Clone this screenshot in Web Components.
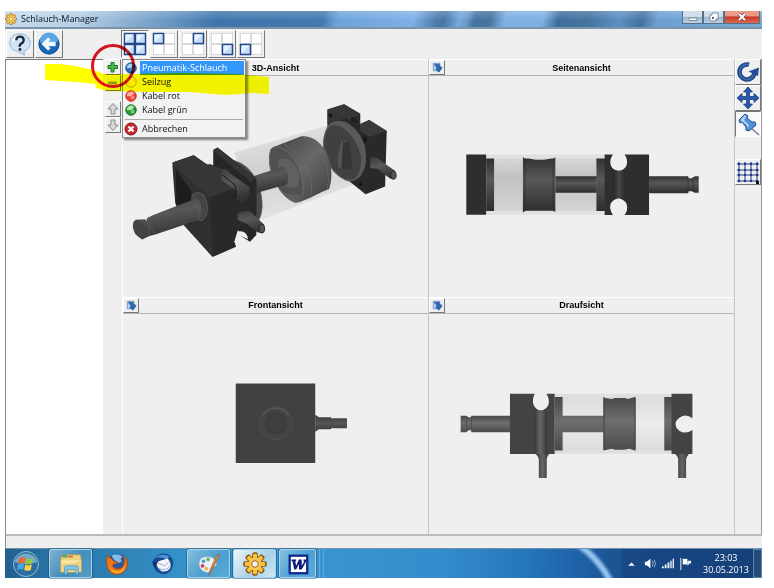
<!DOCTYPE html>
<html lang="de">
<head>
<meta charset="utf-8">
<meta name="viewport" content="width=device-width, initial-scale=1">
<title>Schlauch-Manager</title>
<style>
html,body{margin:0;height:100%;background:#fff}
body{box-sizing:border-box;min-height:100vh;padding:11px 12px 10px 5px;display:flex;font:9px/14px "Open Sans","Noto Sans",sans-serif;color:#111}
</style>
</head>
<body>
<sm-desktop></sm-desktop>
<script>
const svg=(vb,body)=>`<svg viewBox="${vb}" aria-hidden="true">${body}</svg>`;
const paneBox=(x,y,on)=>`<rect x="${x}" y="${y}" width="10" height="10" fill="${on?'#c4dcf6':'#fff'}" stroke="${on?'#24478c':'#d0d3d8'}" stroke-width="${on?1.5:.8}"/>${on?`<path d="M${x+1} ${y+9}V${y+1}H${x+9}Z" fill="#e6f2ff"/>`:''}`;
const panes=(...on)=>svg('0 0 24 24',[[1.5,1.5],[12.5,1.5],[1.5,12.5],[12.5,12.5]].map(([x,y],i)=>({i,s:paneBox(x,y,on.includes(i))})).sort((a,b)=>on.includes(a.i)-on.includes(b.i)).map(o=>o.s).join(''));
const ball=(a,b,c)=>svg('0 0 14 14',`<circle cx="7" cy="7" r="5.3" fill="${a}" stroke="${c}" stroke-width=".8"/><path d="M3 7A4 4 0 0 1 10 4Q8 8 3 7Z" fill="${b}"/><circle cx="8.500" cy="8.500" r="2" fill="${b}" opacity=".6"/>`);
const gearTeeth=Array.from({length:8},(_,i)=>`<rect x="10" y="1" width="4" height="6" rx="1" transform="rotate(${i*45} 12 12)"/>`).join('');
const gear=svg('0 0 24 24',`<g stroke="#8f5a0c" stroke-width="1.600" fill="#f5b32e">${gearTeeth}<circle cx="12" cy="12" r="7"/></g><g fill="#f9bf3e">${gearTeeth.replaceAll('y="1"','y="2"')}</g><circle cx="12" cy="12" r="6.500" fill="#fbc64c"/><circle cx="12" cy="12" r="3.300" fill="#eef4f8" stroke="#9c661a"/>`);
const arrowUp=`<path d="M7 1.500L12 7H9v5H5V7H2Z" fill="#d7d7d7" stroke="#8a8a8a"/>`;
const ICONS={
 gear,
 help:svg('0 0 26 26',`<path d="M13 2C6 2 2 6 2 11.500S5 20 10 21L18 25L17 21C21 20 24 16 24 11.500S20 2 13 2Z" fill="#cfe4f6" stroke="#8fb0ce"/><path d="M5 9Q8 3 14 4Q8 6 6 12Z" fill="#fff"/><path d="M9 9Q9 5 13 5T17 9Q17 11 14.500 12.500T13 16" fill="none" stroke="#222c38" stroke-width="2.600"/><circle cx="13" cy="19" r="1.600" fill="#222c38"/>`),
 back:svg('0 0 26 26',`<circle cx="13" cy="13" r="11" fill="#1763b4" stroke="#0f4788"/><path d="M3 11A10 10 0 0 1 23 10Q13 14 3 11Z" fill="#5da6e4"/><path d="M5 13L12 6L14.500 8.500L12.500 10.800H20V15.200H12.500L14.500 17.500L12 20Z" fill="#f2f9ff" stroke="#d0e5f7" stroke-width=".5"/>`),
 p0:panes(0,1,2,3),p1:panes(0),p2:panes(1),p3:panes(3),p4:panes(2),
 plus:svg('0 0 14 14',`<path d="M5 2.500h3v3h3.500v3H8V12H5V8.500H2v-3h3Z" fill="#47b947" stroke="#16771d"/>`),
 minus:svg('0 0 14 14',`<path d="M2.500 6h8v2h-8Z" fill="#aaa" stroke="#777" stroke-width=".6"/>`),
 up:svg('0 0 14 14',arrowUp), down:svg('0 0 14 14',`<g transform="rotate(180 7 7)">${arrowUp}</g>`),
 expand:svg('0 0 14 14',`<path d="M2.500 2.500h7v8h-7Z" fill="#bcd4f0" stroke="#5584c0" stroke-width=".8"/><path d="M3.500 3.500h5.500v3l2-.500l1 1.500L8.500 12L5 9l1.500-1.500Z" fill="#2e69b5" stroke="#194686" stroke-width=".5"/>`),
 blue:ball('#236cc0','#a3d4fa','#154786'),yellow:ball('#f4e39a','#fff7cf','#b39e59'),red:ball('#e54336','#ffb1a4','#c52b25'),green:ball('#23952f','#b5efac','#16701e'),
 cancel:svg('0 0 14 14',`<circle cx="7" cy="7" r="6" fill="#c6272d" stroke="#85151c"/><path d="M4.500 4.500l5 5m0-5l-5 5" stroke="#fff" stroke-width="2.200"/>`),
 rotate:svg('0 0 24 24',`<path d="M13 4.700A7.500 7.500 0 1 0 18.500 12" fill="none" stroke="#1c3f83" stroke-width="4.500"/><path d="M13 4.700A7.500 7.500 0 1 0 18.500 12" fill="none" stroke="#3968af" stroke-width="2"/><path d="M12.500 11.500L23 7.500L22 16Z" fill="#244b93"/>`),
 move:svg('0 0 24 24',`<path d="M12 1l4.500 5H13.500v4.500H18V7.500L23 12l-5 4.500V13.500H13.500V18H16.500L12 23L7.500 18H10.500V13.500H6V16.500L1 12L6 7.500V10.500H10.500V6H7.500Z" fill="#285ba7" stroke="#163b7e" stroke-width=".8"/>`),
 pin:svg('0 0 24 24',`<path d="M14 15L23 23" stroke="#758394" stroke-width="1.500"/><path d="M3 8L9 2L12 4L11 6L16 10L19 10L20 13L13 19L10 18L10 15L6 10L4 11Z" fill="#5590d8" stroke="#234f92"/><path d="M5 7L9 3L10 5L8 8L13 13L12 16Q10 11 5 9Z" fill="#b0d3f6"/>`),
 grid:svg('0 0 24 24',`<path d="M3 2v20M9 2v20M15 2v20M21 2v20M1 4h22M1 10h22M1 15h22M1 21h22" stroke="#1e3985" fill="none"/><g fill="#1e3985">${[3,9,15,21].map(x=>[4,10,15,21].map(y=>`<circle cx="${x}" cy="${y}" r="1.200"/>`).join('')).join('')}</g><path d="M20 21h3v3h-3Z" fill="#111"/>`),
 start:svg('0 0 28 28',`<circle cx="14" cy="14" r="12.500" fill="#2c6d9e" stroke="#8cbcd9"/><path d="M2.500 12A12 12 0 0 1 25.500 12Q14 16 2.500 12Z" fill="#8fbdd5" opacity=".75"/><path d="M7 8.500Q10 6.500 13.300 8L12.300 13.300Q9 12 6 13.700Z" fill="#ed6534"/><path d="M14.300 8.300Q17.500 10 21 8.200L20 13.500Q17 15.200 13.400 13.500Z" fill="#93c83e"/><path d="M5.800 14.700Q9 13 12 14.500L11 19.800Q8 18.200 5 20Z" fill="#45a9e8"/><path d="M13.200 14.600Q16.500 16.200 19.800 14.600L18.800 20Q15.500 21.500 12.200 20Z" fill="#fbd342"/>`),
 folder:svg('0 0 26 26',`<path d="M2 5h6l1-2h14l1 3v16H2Z" fill="#ecd27d" stroke="#b79b48"/><path d="M4 3h5v3H4Z" fill="#66a45b"/><path d="M10 4h5v2h-5Z" fill="#cf6b46"/><path d="M2 9h22v12H2Z" fill="#f8e6a4"/><path d="M2 12Q14 14 24 9v12H2Z" fill="#edd383"/><path d="M6 24v-7Q6 15 8 15h11q2 0 2 2v7h-3v-5H9v5Z" fill="#83c8ec" stroke="#468fb8" stroke-width=".7"/>`),
 firefox:svg('0 0 26 26',`<circle cx="13" cy="12" r="10.500" fill="#2858a5"/><path d="M7 4Q14 0 20 6Q17 5 17 8Q20 10 15 12Q10 10 7 4Z" fill="#83bde5"/><path d="M3 3Q0 11 3 18Q7 26 15 24Q24 22 24.500 12Q24 7 20 4Q22 10 20 14Q18 19 12 18Q7 16 9 13Q12 14 14 11Q9 11 8 8Q5 7 3 3Z" fill="#e87819" stroke="#a53c12" stroke-width=".8"/><path d="M3 10Q5 21 14 21Q20 20 22 14Q21 23 13 23Q5 22 3 10Z" fill="#f5ba31"/>`),
 mail:svg('0 0 26 26',`<path d="M3 8Q9 0 17 2Q24 5 24 13Q23 22 15 24Q5 24 3 16Q0 11 3 8Z" fill="#174a90"/><path d="M4 7Q12 0 20 5L17 8Q10 4 4 7Z" fill="#4b96d7"/><path d="M8 10L18 7Q22 11 21 17Q18 22 12 21Q7 18 6 13Z" fill="#f2f4f8"/><path d="M7 12L15 15L20 10M9 18Q16 21 20 16" fill="none" stroke="#92a9c5"/><path d="M2 10Q5 12 9 9Q4 14 5 18Q2 15 2 10Z" fill="#102e67"/>`),
 paint:svg('0 0 26 26',`<path d="M2 13Q2 5 11 5Q19 5 21 11Q22 16 17 16Q14 17 15 20Q13 24 7 21Q2 18 2 13Z" fill="#e7f1fa" stroke="#87aac9"/><circle cx="7" cy="10" r="2" fill="#4c9ed8"/><circle cx="12" cy="8" r="2" fill="#60b75a"/><circle cx="6" cy="15" r="2" fill="#d33f4d"/><circle cx="10" cy="18" r="2" fill="#ecb33e"/><path d="M23 2Q25 3 22 8L15 22L13 25L14 20L20 6Z" fill="#d88537" stroke="#975c34" stroke-width=".7"/>`),
 word:svg('0 0 26 26',`<rect x="4" y="4" width="19" height="19" fill="#fff" stroke="#13298a" stroke-width="2.500"/><path d="M6 8h5v2H10l1 5 3-7h3l0 7 3-5h-1V8h4l-6 11h-3v-6l-3 6H9L7 10H6Z" fill="#0c1d75"/>`),
 trayup:svg('0 0 12 12','<path d="M3 8L6 5L9 8Z" fill="#fff"/>'),
 sound:svg('0 0 14 14','<path d="M2 5h2l4-3v10L4 9H2Z" fill="#fff"/><path d="M10 4q2 3 0 6M12 3q3 4 0 8" fill="none" stroke="#bed7ee" stroke-width=".8"/>'),
 signal:svg('0 0 14 14','<path d="M1 10h2v2H1ZM4 8h2v4H4ZM7 6h2v6H7ZM10 4h1.500v8H10ZM12.500 2H14v10H12.500Z" fill="#e8f1f8"/>'),
 flag:svg('0 0 14 14','<path d="M2 1v13" stroke="#fff"/><path d="M4 2h5v6H4Z" fill="#fff"/><path d="M9 4h4v3h-2l-1 2H9Z" fill="#e8f1f8"/>')
};
class SmElement extends HTMLElement{
 connectedCallback(){ if(!this.shadowRoot){this.attachShadow({mode:'open'});this.shadowRoot.innerHTML=this.render();} }
 get label(){return this.getAttribute('label')||'';}
}
const def=(name,render)=>customElements.define(name,class extends SmElement{render(){return render(this)}});

def('sm-icon',e=>`<style>:host{display:block;flex:none;width:var(--icon,14px);height:var(--icon,14px)}svg{display:block;width:100%;height:100%}</style>${ICONS[e.getAttribute('name')]}`);

def('sm-tool',e=>`<style>:host{display:block;flex:none}
button{box-sizing:border-box;display:grid;place-items:center;width:var(--w,28px);height:var(--h,28px);padding:0;background:#efefef;border:1px solid;border-color:#fff #777 #777 #fff}
:host([pressed]) button{background:#f9f9f9;border-color:#777 #fff #fff #777}</style>
<button type="button" aria-label="${e.label}"><sm-icon name="${e.getAttribute('icon')}"></sm-icon></button>`);

def('sm-titlebar',()=>`<style>
:host{display:flex;height:16px;align-items:stretch;border-bottom:2px solid #7d93a8;color:#0c1520;
background:linear-gradient(#fff3,#fff0 60%),linear-gradient(105deg,#c5dbec 0,#b6d0e6 10%,#8fb2d2 16%,#6896c4 22%,#3f75ac 28%,#4378b0 42%,#6ea3d8 44%,#7db0e6 54%,#4d7cab 57%,#4676a8 58%,#74a8dc 60%,#6a9bcd 61%,#45729f 62%,#45729f 64%,#7db0e3 66%,#7db0e3 71%,#3f6d9d 73%,#45749f 77%,#5b8fc4 81%,#44729f 84%,#6ca0d2 86%,#7aa9d4 100%)}
sm-icon{--icon:12px;align-self:center;margin:0 4px 0 0}
h1{margin:0;font:inherit;line-height:16px;flex:1;min-width:0}
.win{display:flex;height:13px}
button{display:grid;place-items:center;width:21px;padding:0;border:1px solid #56708a;border-top:0;background:linear-gradient(#d3e0ec 45%,#9db7cf 50%,#bdd1e4)}
button.close{width:36px;background:linear-gradient(#eb9a87 40%,#c83725 50%,#dd6b50);margin-right:2px}
svg{width:12px;height:10px}</style>
<sm-icon name="gear"></sm-icon><h1>Schlauch-Manager</h1>
<div class="win"><button type="button" aria-label="Minimieren">${svg('0 0 12 10','<path d="M2 6h8v2.500H2Z" fill="#fff" stroke="#53687d" stroke-width=".7"/>')}</button>
<button type="button" aria-label="Wiederherstellen">${svg('0 0 12 10','<path d="M4 1h6v6H8v2H2V3h2Z" fill="#fff" stroke="#53687d" stroke-width=".7"/><path d="M4 5h2v2H4Z" fill="#53687d"/>')}</button>
<button type="button" class="close" aria-label="Schließen">${svg('0 0 12 10','<path d="M3 2l6 6m0-6l-6 6" stroke="#6e3b3b" stroke-width="3.200"/><path d="M3 2l6 6m0-6l-6 6" stroke="#fff" stroke-width="2"/>')}</button></div>`);

def('sm-toolbar',()=>`<style>:host{display:flex;align-items:center;gap:1px;height:30px;padding-left:1px;background:#efefef}
sm-tool{--icon:24px}.gap{width:56px}</style>
<sm-tool icon="help" label="Hilfe"></sm-tool><sm-tool icon="back" label="Zurück"></sm-tool><span class="gap"></span>
<sm-tool pressed icon="p0" label="Vier Ansichten"></sm-tool><sm-tool icon="p1" label="3D-Ansicht"></sm-tool><sm-tool icon="p2" label="Seitenansicht"></sm-tool><sm-tool icon="p3" label="Draufsicht"></sm-tool><sm-tool icon="p4" label="Frontansicht"></sm-tool>`);

def('sm-item',e=>`<style>:host{display:block}
button{display:flex;align-items:center;gap:2px;width:100%;height:14px;padding:0;border:0;background:none;font:inherit;color:#111;text-align:left}
span{flex:1;padding-left:2px;line-height:14px}
:host([selected]) span{background:#3296fa;color:#fff}</style>
<button type="button" role="menuitem"><sm-icon name="${e.getAttribute('icon')}"></sm-icon><span><slot></slot></span></button>`);

def('sm-menu',()=>`<style>:host{display:block;box-sizing:border-box;width:124px;padding:1px;background:#f2f2f2;border:1px solid #8d8d8d;box-shadow:2px 2px 2px #0007}
hr{border:0;border-top:1px solid #aaa;margin:2px 1px}</style>
<div role="menu"><sm-item selected icon="blue">Pneumatik-Schlauch</sm-item><sm-item icon="yellow">Seilzug</sm-item><sm-item icon="red">Kabel rot</sm-item><sm-item icon="green">Kabel grün</sm-item><hr><sm-item icon="cancel">Abbrechen</sm-item></div>`);

def('sm-side',()=>`<style>:host{position:relative;display:flex;flex-direction:column;--w:16px;--h:16px;--icon:14px}
.sp{height:10px}sm-menu{position:absolute;left:100%;top:0;z-index:2}</style>
<sm-tool icon="plus" label="Hinzufügen"></sm-tool><sm-tool icon="minus" label="Entfernen"></sm-tool><span class="sp"></span><sm-tool icon="up" label="Nach oben"></sm-tool><sm-tool icon="down" label="Nach unten"></sm-tool><sm-menu></sm-menu>`);

def('sm-view',e=>`<style>:host{display:flex;flex-direction:column;min-width:0;min-height:0;border-right:1px solid #c4c4c4}
header{display:grid;grid-template-columns:16px 1fr 16px;align-items:center;height:15px;border-bottom:1px solid #b5b5b5;border-top:1px solid #fff;--w:16px;--h:15px;--icon:13px}
h2{margin:0;text-align:center;font:bold 9px/14px "Liberation Sans",Arial,sans-serif;color:#000}
.body{flex:1;min-height:0;display:flex}::slotted(svg){width:100%;height:100%;min-height:0}</style>
<header><sm-tool icon="expand" label="${e.label} vergrößern"></sm-tool><h2>${e.label}</h2></header><div class="body"><slot></slot></div>`);

/* Drawings use three units per pixel */
const draw=(vb,x,y,b)=>`<svg viewBox="${vb}" role="img" aria-label="Zylinder"><g transform="translate(${x} ${y}) scale(.33333)">${b}</g></svg>`;
const d3=draw('122 75 306 222',120,90,`
<defs><linearGradient id="r" x1="0" y1="0" x2=".3" y2="1"><stop stop-color="#3c3c3c"/><stop offset=".45" stop-color="#585858"/><stop offset="1" stop-color="#333"/></linearGradient>
<linearGradient id="pi" x1="0" y1="0" x2="1" y2="1"><stop stop-color="#404040"/><stop offset=".5" stop-color="#686868"/><stop offset="1" stop-color="#3c3c3c"/></linearGradient>
<linearGradient id="gl" x1="0" y1="0" x2=".3" y2="1"><stop stop-color="#e9e9e9"/><stop offset=".5" stop-color="#d0d0d0"/><stop offset="1" stop-color="#e3e3e3"/></linearGradient></defs>
<path d="M340 186L645 98Q700 110 730 190Q735 255 695 285L415 392Z" fill="url(#gl)"/>
<path d="M622 56L672 40L721 69V100L748 88L801 121L796 289L737 312L685 271L622 160Z" fill="#292929"/>
<path d="M622 56L672 40L721 69L701 88L678 82L622 100Z" fill="#363636"/><path d="M748 88L801 121L748 139L720 120L720 101Z" fill="#3a3a3a"/>
<path d="M690 94q-4-16 11-18q14 5 18 22" fill="#202020" stroke="#444" stroke-width="2"/>
<path d="M623 105Q643 82 680 95Q719 119 735 165Q746 224 724 254Q706 278 680 272Q635 254 613 197Q601 143 623 105Z" fill="#595959"/>
<path d="M622 112Q640 91 671 111Q712 140 725 198Q728 248 706 266Q687 276 660 259Q621 230 611 178Q607 136 622 112Z" fill="#414141" stroke="#666" stroke-width="2"/>
<path d="M635 113Q689 145 706 201Q713 247 701 265Q643 247 620 187Q612 140 635 113Z" fill="#404040"/><path d="M664 151L688 154L697 223L692 239L654 232L652 203Z" fill="#545454"/><path d="M669 156L688 154L697 223L692 239L664 234Z" fill="#353535"/>
<circle cx="631" cy="74" r="6" fill="#171717"/><ellipse cx="735" cy="147" rx="6" ry="9" fill="#171717"/><circle cx="722" cy="282" r="5" fill="#141414"/>
<path d="M752 203Q772 195 783 211L827 242L822 268L810 264L775 237L751 232Z" fill="url(#r)"/><ellipse cx="822" cy="255" rx="8" ry="12" fill="#555" stroke="#292929" stroke-width="2"/>
<path d="M340 210Q390 223 416 287Q436 360 411 396L370 360Z" fill="#484848" stroke="#5e5e5e" stroke-width="2"/>
<path d="M455 171L543 137Q585 133 616 180Q645 240 627 296L605 305L570 323L535 337Q500 331 470 281Q438 217 449 180Z" fill="url(#pi)"/>
<path d="M451 177Q468 157 500 183Q540 219 549 285Q550 326 527 338Q492 329 464 276Q437 220 451 177Z" fill="#505050" stroke="#6b6b6b" stroke-width="3"/><path d="M486 157Q552 193 572 265Q576 296 572 323M550 139Q602 163 621 233Q630 266 621 298" fill="none" stroke="#6e6e6e" stroke-width="2"/>
<path d="M474 209Q508 190 535 243Q544 287 520 293Q495 293 474 270Z" fill="#606060"/>
<path d="M385 262L490 228Q510 250 500 282L405 309Z" fill="url(#r)"/><path d="M480 299Q493 313 538 313L533 336Q502 332 480 299Z" fill="#666" opacity=".6"/>
<path d="M277 178L290 171L407 264V435L388 456L360 438L277 240Z" fill="#262626"/><path d="M290 171L407 264L389 274L278 183Z" fill="#343434"/>
<path d="M154 216L218 194L258 222L270 222L304 236L345 299L343 322L353 337L382 315L407 270V365L383 379L350 425L341 456L346 471L275 502L185 402L162 337L154 230Z" fill="#292929"/>
<path d="M154 216L218 194L258 222L270 222L304 236L341 294L266 322L157 225Z" fill="#363636"/><path d="M157 225L266 322L277 499L185 402L164 340Z" fill="#303030"/><path d="M164 237L211 304L211 403L185 396L166 340Z" fill="#1c1c1c"/>
<path d="M301 238Q315 230 330 251L387 291Q390 322 370 336L342 330Q357 316 342 298L302 270Z" fill="url(#r)"/>
<path d="M304 253L342 284L347 303L333 329" fill="none" stroke="#1c1c1c" stroke-width="3"/>
<path d="M352 425Q378 420 382 448L360 438L348 468L341 456Z" fill="#efefef"/>
<path d="M214 313Q229 301 248 313Q266 346 255 379Q245 397 230 389Q205 357 214 313Z" fill="#444" stroke="#585858" stroke-width="3"/>
<path d="M231 323L92 376L75 386L76 394L70 388L43 389Q29 410 42 433L62 449L84 438L102 434L239 388Q249 355 231 323Z" fill="url(#r)"/><path d="M81 380Q78 405 102 434M222 326Q236 354 235 388M75 394Q86 410 82 436" fill="none" stroke="#606060" stroke-width="2"/><ellipse cx="54" cy="417" rx="17" ry="29" transform="rotate(-26 54 417)" fill="#444"/>
<path d="M350 371Q371 357 391 366L431 404L424 430L410 427L380 402L351 390Z" fill="url(#r)"/><ellipse cx="424" cy="416" rx="8" ry="13" fill="#555" stroke="#242424" stroke-width="3"/>`);
const dSide=draw('429 75 306 222',430,130,`
<defs><linearGradient id="v" x1="0" y1="0" x2="0" y2="1"><stop stop-color="#313131"/><stop offset=".4" stop-color="#585858"/><stop offset="1" stop-color="#2d2d2d"/></linearGradient><linearGradient id="h"><stop stop-color="#292929"/><stop offset=".5" stop-color="#484848"/><stop offset="1" stop-color="#292929"/></linearGradient><linearGradient id="g" x1="0" y1="0" x2="0" y2="1"><stop stop-color="#d6d6d6"/><stop offset=".35" stop-color="#c2c2c2"/><stop offset="1" stop-color="#d4d4d4"/></linearGradient></defs>
<path d="M168 72h358v182H168Z" fill="#e1e1e1"/><path d="M192 84h309v158H192Z" fill="url(#g)"/><path d="M108 72h60v182h-60Z" fill="#2e2e2e"/><path d="M168 84h24v159h-24ZM501 84h26v159h-26Z" fill="url(#v)"/>
<path d="M279 80L285 84H290L296 84L317 88H343L366 84L373 84L377 80V245L368 242L342 242H317L296 242L287 242L279 247Z" fill="url(#v)"/><path d="M377 138h125v50H377Z" fill="url(#v)"/>
<path d="M526 72H551Q539 88 545 106Q551 119 568 122Q585 119 592 105Q597 87 586 72H660V255H586Q598 240 592 221Q585 207 568 204Q551 207 544 221Q539 238 551 255H526Z" fill="#2e2e2e"/><path d="M553 121h34v83h-34Z" fill="url(#h)"/><path d="M660 138H778V144H788L799 138H810V188H798L789 183H778V189H660Z" fill="url(#v)"/><path d="M778 139v49M790 144Q797 163 790 182M285 87v153M370 88v152" stroke="#2c2c2c" stroke-width="2" fill="none"/>`);
const dFront=draw('122 313 306 222',110,290,`
<defs><linearGradient id="f" x1="0" y1="0" x2="0" y2="1"><stop stop-color="#393939"/><stop offset=".5" stop-color="#565656"/><stop offset="1" stop-color="#333"/></linearGradient></defs>
<path d="M375 279h240v240H375Z" fill="#414141"/><circle cx="496" cy="399" r="49" fill="#434343" stroke="#4b4b4b" stroke-width="4"/><circle cx="496" cy="399" r="31" fill="#3e3e3e" stroke="#373737" stroke-width="3"/><path d="M455 378A46 46 0 0 1 535 376" fill="none" stroke="#555" stroke-width="4"/><path d="M615 373L626 381H663V384H711V414H663V417H626L615 425Z" fill="url(#f)"/>`);
const dTop=draw('429 313 306 222',440,290,`
<defs><linearGradient id="tv" x1="0" y1="0" x2="0" y2="1"><stop stop-color="#484848"/><stop offset=".45" stop-color="#6e6e6e"/><stop offset="1" stop-color="#4a4a4a"/></linearGradient><linearGradient id="th"><stop stop-color="#353535"/><stop offset=".5" stop-color="#666"/><stop offset="1" stop-color="#353535"/></linearGradient><linearGradient id="tg" x1="0" y1="0" x2="0" y2="1"><stop stop-color="#dcdcdc"/><stop offset=".5" stop-color="#ececec"/><stop offset="1" stop-color="#dcdcdc"/></linearGradient></defs>
<path d="M345 310h355v181H345Z" fill="#dfdfdf"/><path d="M369 321h306v158H369Z" fill="url(#tg)"/><path d="M345 320h24v161h-24ZM676 320h24v161h-24ZM369 376h125v50H369Z" fill="url(#tv)"/><path d="M492 319L498 323L518 326L526 323H557L566 326L589 319V482L571 476L553 479H527L517 476L492 481Z" fill="url(#tv)"/><path d="M494 323v156M588 323v156" stroke="#444" stroke-width="3"/>
<path d="M61 376H78L85 381H93V376H211V426H94V420H85L78 426H61Z" fill="url(#tv)"/><path d="M94 377v48M81 381Q74 400 82 420" stroke="#444" stroke-width="2" fill="none"/>
<path d="M210 310H285Q276 326 281 343Q288 358 303 361Q319 358 326 344Q331 326 320 310H345V492H210Z" fill="#444"/><path d="M282 360h40v132h-40Z" fill="url(#th)"/><path d="M288 492H328Q322 500 321 508V564H297V508Q296 500 288 492Z" fill="url(#th)"/>
<path d="M698 310H761V384Q747 373 731 377Q710 387 710 401Q711 419 731 426Q747 429 761 419V492H698Z" fill="#444"/><path d="M710 492H750Q743 501 742 508V564H718V508Q717 500 710 492Z" fill="url(#th)"/>`);

def('sm-main',()=>`<style>:host{flex:1;min-height:0;display:grid;grid-template-columns:100px 17px minmax(0,1fr) 26px;background:#efefef}
.list{background:#fff;border-top:1px solid #777;border-left:1px solid #888;margin-right:2px}
.views{display:grid;grid-template:minmax(0,1fr) minmax(0,1fr)/minmax(0,1fr) minmax(0,1fr);min-height:0;border-left:1px solid #fff}
nav{display:flex;flex-direction:column;--w:26px;--h:26px;--icon:24px}.sp{height:22px}</style>
<div class="list" role="listbox" aria-label="Schläuche"></div><sm-side></sm-side>
<div class="views"><sm-view label="3D-Ansicht">${d3}</sm-view><sm-view label="Seitenansicht">${dSide}</sm-view><sm-view label="Frontansicht">${dFront}</sm-view><sm-view label="Draufsicht">${dTop}</sm-view></div>
<nav><sm-tool icon="rotate" label="Drehen"></sm-tool><sm-tool icon="move" label="Verschieben"></sm-tool><sm-tool pressed icon="pin" label="Fixieren"></sm-tool><span class="sp"></span><sm-tool icon="grid" label="Raster"></sm-tool></nav>`);

def('sm-task',e=>`<style>:host{display:block;width:43px}
button{box-sizing:border-box;display:grid;place-items:center;width:100%;height:29px;padding:0;background:none;border:1px solid transparent;border-radius:2px}
:host([open]) button{background:linear-gradient(130deg,#b9ddec99,#66afd666 55%,#8fcce566);border-color:#a6d4ea;box-shadow:0 0 0 1px #18507e88}
:host([active]) button{background:linear-gradient(130deg,#edf5fa,#a7cfe7 60%,#cfeaf4)}</style>
<button type="button" aria-label="${e.label}"><sm-icon name="${e.getAttribute('icon')}"></sm-icon></button>`);

def('sm-taskbar',()=>`<style>:host{display:flex;align-items:stretch;height:30px;box-sizing:border-box;border-top:1px solid #7290aa;gap:3px;color:#fff;--icon:24px;
background:linear-gradient(90deg,#21608f 0,#2670a1 5%,#338fc6 22%,#3b99d4 36%,#338ccb 58%,#2576ba 69%,#1c5fa7 75%,#174a87 80%,#163f78 100%)}
.start{--icon:28px;width:41px}.word{width:37px}.edge{width:3px;border:1px solid #5fa8d8;border-width:0 1px}
.fill{flex:1;min-width:0}
.fill svg{display:block;width:100%;height:100%}
.tray{display:flex;align-items:center;gap:5px;--icon:13px;padding-right:7px}
time{width:48px;align-self:center;text-align:center;line-height:12px}.show{width:9px;padding:0;border:1px solid #5d86b1;background:#234c7b}</style>
<sm-task class="start" icon="start" label="Start"></sm-task><sm-task open icon="folder" label="Explorer"></sm-task><sm-task icon="firefox" label="Firefox"></sm-task><sm-task icon="mail" label="Thunderbird"></sm-task><sm-task open icon="paint" label="Paint"></sm-task><sm-task open active icon="gear" label="Schlauch-Manager"></sm-task><sm-task class="word" open icon="word" label="Word"></sm-task><span class="edge"></span>
<div class="fill"><svg viewBox="0 0 300 29" preserveAspectRatio="xMaxYMid slice" aria-hidden="true"><defs><filter id="b"><feGaussianBlur stdDeviation="1.500"/></filter></defs><path d="M208 0L226 29H300V0Z" fill="#2a75bd" opacity=".25"/><path d="M257 -4Q277 10 289 33" fill="none" stroke="#9ac7f2" stroke-width="6" filter="url(#b)"/></svg></div>
<div class="tray"><sm-icon name="trayup"></sm-icon><sm-icon name="sound"></sm-icon><sm-icon name="signal"></sm-icon><sm-icon name="flag"></sm-icon></div><time datetime="2013-05-30T23:03">23:03<br>30.05.2013</time><button type="button" class="show" aria-label="Desktop anzeigen"></button>`);

/* Highlighter stroke and ring drawn over the window */
def('sm-marker',()=>`<style>:host{position:absolute;left:0;top:0;width:270px;height:100px;pointer-events:none;mix-blend-mode:multiply;z-index:5}svg{display:block;width:100%;height:100%}</style>
${svg('5 11 270 100','<path d="M45 64L60 64L75 66L94 70L104 74L137 74L180 73L235 74L269 77V94L252 93L225 95L190 92L150 92L107 91L96 88L95 84L76 82L45 80Z" fill="#ffff00"/><circle cx="113" cy="66" r="20.500" fill="none" stroke="#e3141f" stroke-width="3"/>')}`);

def('sm-desktop',()=>`<style>:host{position:relative;flex:1;min-width:0;display:flex;flex-direction:column}
footer{height:14px;box-sizing:border-box;background:#efefef;border-top:2px solid #bbb;border-left:1px solid #888}
sm-main{border-right:1px solid #999}</style>
<sm-titlebar></sm-titlebar><sm-toolbar></sm-toolbar><sm-main></sm-main><footer></footer><sm-taskbar></sm-taskbar><sm-marker></sm-marker>`);
</script>
</body>
</html>
